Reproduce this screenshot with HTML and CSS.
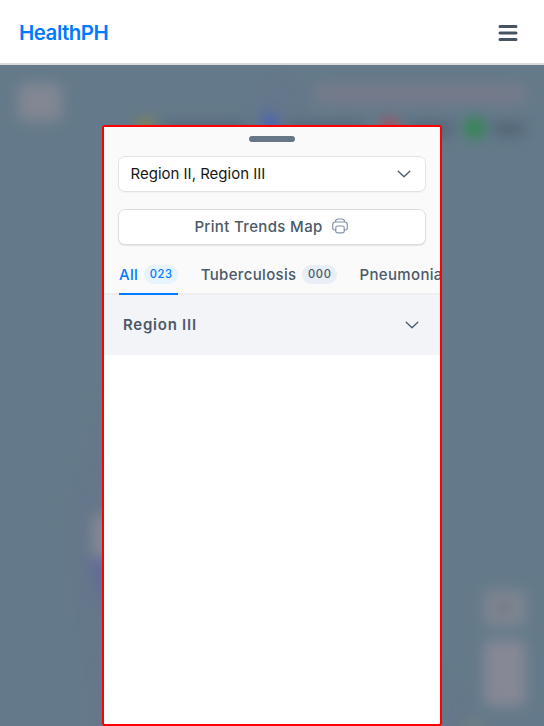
FILE: index.html
```html
<!DOCTYPE html>
<html lang="en">
<head>
<meta charset="utf-8">
<title>HealthPH</title>
<link rel="stylesheet" href="styles.css">
</head>
<body>
<header class="navbar">
  <span class="brand">HealthPH</span>
  <svg class="menu" viewBox="0 0 20 18" width="20" height="18"><path d="M2 2.500h16M2 9h16M2 15.500h16"/></svg>
</header>
<main class="stage">
  <svg class="map" viewBox="0 0 544 661" width="544" height="661">
    <defs>
      <filter id="soft" x="-50%" y="-50%" width="200%" height="200%" color-interpolation-filters="sRGB"><feGaussianBlur stdDeviation="7"/></filter>
    </defs>
    <g filter="url(#soft)">
      <path d="M250 60l14-42 16-12 22 12 10 60zM104 330L68 450l6 80 20 140h40z" fill="#65758a" opacity=".6"/>
      <path d="M442 610l28 20 6 40h-34z" fill="#65758a" opacity=".6"/>
      <rect x="18" y="18" width="44" height="38" rx="6" fill="#828793"/>
      <rect x="314" y="18" width="212" height="22" rx="5" fill="#757b8b"/>
      <circle cx="146" cy="63" r="9" fill="#8a8546"/>
      <path d="M266 43l10 13v15h-12z" fill="#3f5cc0"/>
      <circle cx="390" cy="63" r="9" fill="#b04452"/>
      <circle cx="475" cy="63" r="10" fill="#2a8a48"/>
      <path d="M164 58h82v12h-82zM286 58h80v12h-80zM408 58h44v12h-44zM493 58h32v12h-32z" fill="#506273"/>
      <rect x="92" y="450" width="30" height="42" fill="#858994"/>
      <path d="M88 493h28v54l-14-12z" fill="#626b98"/>
      <rect x="484" y="525" width="42" height="36" rx="5" fill="#7f8691"/>
      <circle cx="504" cy="542" r="5" fill="#606c79"/>
      <rect x="484" y="575" width="42" height="66" rx="5" fill="#868895"/>
      <circle cx="472" cy="662" r="9" fill="#70817f"/>
    </g>
  </svg>
  <section class="sheet">
    <div class="controls">
      <span class="grip"></span>
      <div class="field select">
        <span>Region II, Region III</span>
        <svg class="chevron" viewBox="0 0 14 8" width="14" height="8"><path d="M1.200 1.200L7 6.800l5.800-5.600"/></svg>
      </div>
      <button class="field print">
        <span>Print Trends Map</span>
        <svg class="printer" viewBox="0 0 16 16" width="16" height="16"><path d="M3.500 4V3.200A2.500 2.500 0 0 1 6 1h4a2.500 2.500 0 0 1 2.500 2.200V4M4 12H2.600A1.900 1.900 0 0 1 .7 10V6.600A2.600 2.600 0 0 1 3.300 4h9.400a2.600 2.600 0 0 1 2.600 2.600V10a1.900 1.900 0 0 1-1.900 2H12"/><rect x="3.800" y="8" width="8.400" height="6.800" rx="1.500"/></svg>
      </button>
    </div>
    <nav class="tabs">
      <a class="tab active"><span>All</span><span class="count">023</span></a>
      <a class="tab"><span>Tuberculosis</span><span class="count">000</span></a>
      <a class="tab"><span>Pneumonia</span></a>
    </nav>
    <div class="region">
      <span>Region III</span>
      <svg class="chevron" viewBox="0 0 14 8" width="14" height="8"><path d="M1.200 1.200L7 6.800l5.800-5.600"/></svg>
    </div>
  </section>
</main>
</body>
</html>
```

FILE: styles.css
```css
* { box-sizing: border-box; }
body {
  margin: 0;
  height: 726px;
  overflow: hidden;
  font-family: Inter, sans-serif;
  color: #4b5a69;
}
.navbar {
  height: 65px;
  display: flex;
  align-items: center;
  justify-content: space-between;
  padding: 0 26px 0 19px;
  background: #fff;
  border-bottom: 2px solid #dcdcdc;
}
.brand {
  font-size: 20.5px;
  font-weight: 600;
  letter-spacing: -0.5px;
  color: #007aff;
  padding-top: 2px;
}
.menu {
  fill: none;
  stroke: #465360;
  stroke-width: 3;
  stroke-linecap: round;
  margin-top: 2px;
}
.stage {
  position: relative;
  height: 661px;
  background: #647a8a;
  padding-top: 60px;
  overflow: hidden;
}
.map { position: absolute; top: 0; left: 0; }
.sheet {
  position: relative;
  width: 340px;
  height: 601px;
  margin: 0 auto;
  border: 2px solid #f00;
  border-radius: 3px;
  background: #fff;
  overflow: hidden;
}
.controls {
  display: flex;
  flex-direction: column;
  background: #fafafa;
  padding: 9px 14px 0;
}
.grip {
  width: 46px;
  height: 6px;
  border-radius: 3px;
  background: #687787;
  align-self: center;
  margin-bottom: 14px;
}
.field {
  height: 36px;
  display: flex;
  align-items: center;
  border: 1px solid #e3e3e5;
  border-radius: 7px;
  background: #fff;
  font-family: inherit;
}
.select {
  justify-content: space-between;
  padding: 0 14px 1px 11.5px;
  margin-bottom: 17px;
  font-size: 15px;
  color: #171717;
  box-shadow: 0 1px 1px #00000008;
}
.print {
  justify-content: center;
  gap: 9px;
  padding: 0 2px 2px 0;
  font-size: 15px;
  font-weight: 500;
  letter-spacing: 0.35px;
  color: #4b5a69;
  border-color: #dcdde0;
  box-shadow: 0 1px 1px #00000018;
}
.chevron {
  fill: none;
  stroke: #4b5a69;
  stroke-width: 1.3;
  stroke-linecap: round;
  stroke-linejoin: round;
}
.printer { fill: none; stroke: #8492a4; stroke-width: 1.2; }
.tabs {
  height: 50px;
  display: flex;
  gap: 22.5px;
  padding: 10px 0 0 15px;
  background: #fafafa;
  box-shadow: inset 0 -2px #eeeff1;
}
.tab {
  display: flex;
  align-items: center;
  gap: 5.5px;
  flex: none;
  font-size: 15px;
  font-weight: 500;
  letter-spacing: 0.34px;
  border-bottom: 2px solid transparent;
}
.active { color: #007aff; border-color: #007aff; }
.count {
  height: 19px;
  padding: 0 5.5px 0 6px;
  border-radius: 10px;
  background: #e8eef6;
  font-size: 11.2px;
  line-height: 19px;
  letter-spacing: 0.6px;
}
.active .count { background: #e6f4ff; }
.region {
  height: 60px;
  display: flex;
  align-items: center;
  justify-content: space-between;
  padding: 0 21px 1px 19px;
  background: #f2f4f8;
  font-size: 15px;
  font-weight: 600;
  letter-spacing: 0.75px;
}
```
